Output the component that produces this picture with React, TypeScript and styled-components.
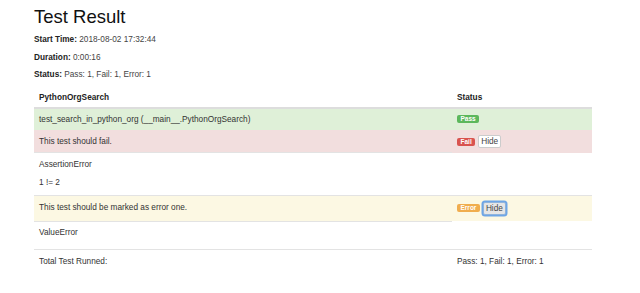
import styled, { createGlobalStyle, css } from "styled-components";

const GlobalStyle = createGlobalStyle`
  html, body {
    margin: 0;
    padding: 0;
    background: #ffffff;
  }
  body {
    font-family: "Liberation Sans", Arial, Helvetica, sans-serif;
    color: #333333;
  }
`;

export const Page = styled.div`
  width: 640px;
  height: 293px;
  box-sizing: border-box;
  padding: 6px 0 0 34px;
  overflow: hidden;
`;

export const Title = styled.h1`
  margin: 0 0 6px;
  font-size: 18.5px;
  font-weight: 500;
  line-height: 22px;
  color: #111111;
`;

export const Attribute = styled.p`
  margin: 0 0 6px;
  font-size: 8.25px;
  line-height: 11.5px;
  color: #444444;

  strong {
    color: #222222;
  }
`;

export const Table = styled.table`
  width: 558px;
  margin-top: 6px;
  border-collapse: collapse;
  border-spacing: 0;
  font-size: 8.25px;
  line-height: 11.5px;
`;

export const HeadCell = styled.th<{ $width?: number }>`
  text-align: left;
  font-weight: bold;
  color: #222222;
  padding: 5px 5px 4px;
  border-bottom: 2px solid #dddddd;
  ${(p) => p.$width && css`width: ${p.$width}px;`}
`;

type Tone = "success" | "danger" | "warning";

const rowBg: Record<Tone, string> = {
  success: "#dff0d8",
  danger: "#f2dede",
  warning: "#fcf8e3",
};

export const Row = styled.tr<{ $tone?: Tone; $tall?: boolean }>`
  background: ${(p) => (p.$tone ? rowBg[p.$tone] : "transparent")};
  height: ${(p) => (p.$tall ? "26px" : "auto")};
`;

export const Cell = styled.td<{ $topLine?: boolean }>`
  padding: 4.5px 5px;
  vertical-align: middle;
  color: #333333;
  border-top: 1px solid ${(p) => (p.$topLine ? "#e3e3e3" : "transparent")};
`;

export const FootCell = styled(Cell)`
  padding-top: 5.5px;
`;

export const StatusBox = styled.div`
  display: flex;
  align-items: center;
  gap: 3px;
`;

const labelBg: Record<Tone, string> = {
  success: "#5cb85c",
  danger: "#d9534f",
  warning: "#f0ad4e",
};

export const Label = styled.span<{ $tone: Tone }>`
  display: inline-block;
  height: 8px;
  padding: 0 3.5px;
  border-radius: 2px;
  background: ${(p) => labelBg[p.$tone]};
  color: #ffffff;
  font-size: 6.5px;
  font-weight: bold;
  line-height: 8px;
`;

export const HideButton = styled.button<{ $focused?: boolean }>`
  height: 13px;
  padding: 0 2px;
  border: 1px solid #cccccc;
  border-radius: 2px;
  background: #ffffff;
  color: #444444;
  font-family: "Liberation Sans", Arial, sans-serif;
  font-size: 8.25px;
  line-height: 11px;
  ${(p) =>
    p.$focused &&
    css`
      background: #e6e6e6;
      border-color: #8fb4dc;
      box-shadow: 0 0 0 1.5px #6ea6e6;
    `}
`;

export const Detail = styled.div<{ $top?: number; $extra?: number }>`
  padding-top: ${(p) => p.$top ?? 0}px;
  padding-bottom: ${(p) => p.$extra ?? 0}px;

  p {
    margin: 0;
  }
  p + p {
    margin-top: 6.5px;
  }
`;

export default function App() {
  return (
    <>
      <GlobalStyle />
      <Page>
        <Title>Test Result</Title>
        <Attribute>
          <strong>Start Time:</strong> 2018-08-02 17:32:44
        </Attribute>
        <Attribute>
          <strong>Duration:</strong> 0:00:16
        </Attribute>
        <Attribute>
          <strong>Status:</strong> Pass: 1, Fail: 1, Error: 1
        </Attribute>

        <Table>
          <thead>
            <tr>
              <HeadCell $width={408}>PythonOrgSearch</HeadCell>
              <HeadCell>Status</HeadCell>
            </tr>
          </thead>
          <tbody>
            <Row $tone="success">
              <Cell>test_search_in_python_org (__main__.PythonOrgSearch)</Cell>
              <Cell>
                <StatusBox>
                  <Label $tone="success">Pass</Label>
                </StatusBox>
              </Cell>
            </Row>
            <Row $tone="danger">
              <Cell>This test should fail.</Cell>
              <Cell>
                <StatusBox>
                  <Label $tone="danger">Fail</Label>
                  <HideButton>Hide</HideButton>
                </StatusBox>
              </Cell>
            </Row>
            <Row>
              <Cell $topLine>
                <Detail $top={1} $extra={2}>
                  <p>AssertionError</p>
                  <p>1 != 2</p>
                </Detail>
              </Cell>
            </Row>
            <Row $tone="warning" $tall>
              <Cell $topLine>This test should be marked as error one.</Cell>
              <Cell $topLine>
                <StatusBox>
                  <Label $tone="warning">Error</Label>
                  <HideButton $focused>Hide</HideButton>
                </StatusBox>
              </Cell>
            </Row>
            <Row>
              <Cell $topLine>
                <Detail $top={1} $extra={6}>
                  <p>ValueError</p>
                </Detail>
              </Cell>
            </Row>
          </tbody>
          <tfoot>
            <Row>
              <FootCell $topLine>Total Test Runned:</FootCell>
              <FootCell $topLine>Pass: 1, Fail: 1, Error: 1</FootCell>
            </Row>
          </tfoot>
        </Table>
      </Page>
    </>
  );
}
